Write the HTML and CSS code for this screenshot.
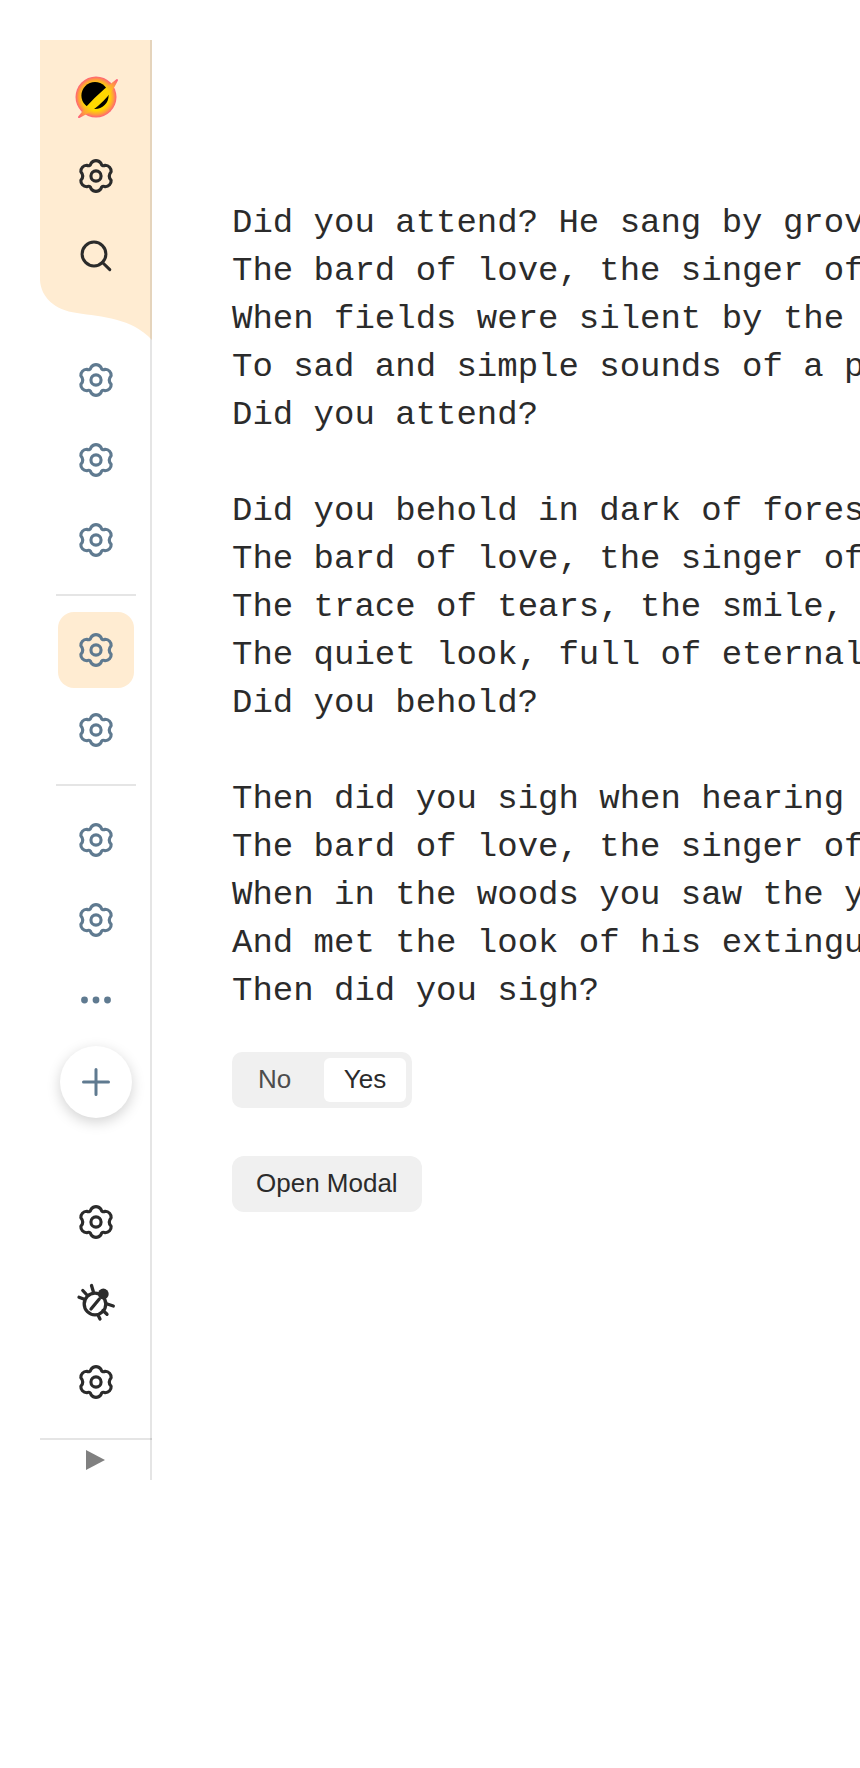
FILE: index.html
```html
<!DOCTYPE html>
<html lang="en">
<head>
    <meta charset="UTF-8">
    <title>Did you attend?</title>
    <meta name="viewport" content="width=device-width, initial-scale=1">
    <link rel="stylesheet" href="styles.css">
</head>
<body>
    <svg class="defs" width="0" height="0" aria-hidden="true">
        <defs>
            <symbol id="gear" viewBox="1.5 1.5 37 37">
                <path fill="none" stroke="currentColor" stroke-width="2.9" stroke-linejoin="round" d="M15.6 8A5.5 5.5 0 0 1 24.4 8Q25.5 11.5 28.6 10.1A5.5 5.5 0 0 1 34 16Q30.5 20 34 24A5.5 5.5 0 0 1 28.6 29.9Q25.5 28.5 24.4 32A5.5 5.5 0 0 1 15.6 32Q14.5 28.5 11.4 29.9A5.5 5.5 0 0 1 6 24Q9.5 20 6 16A5.5 5.5 0 0 1 11.4 10.1Q14.5 11.5 15.6 8Z"/>
                <circle cx="20" cy="20" r="4.7" fill="none" stroke="currentColor" stroke-width="2.9"/>
            </symbol>
            <radialGradient id="halo">
                <stop offset="0.66" stop-color="#ffd800"/>
                <stop offset="0.84" stop-color="#ffa238"/>
                <stop offset="1" stop-color="#ff6079"/>
            </radialGradient>
            <linearGradient id="band" gradientUnits="userSpaceOnUse" x1="5" y1="42" x2="43" y2="5">
                <stop offset="0" stop-color="#ff6079"/>
                <stop offset="0.14" stop-color="#ffa238"/>
                <stop offset="0.28" stop-color="#ffd800"/>
                <stop offset="0.72" stop-color="#ffd800"/>
                <stop offset="0.86" stop-color="#ffa238"/>
                <stop offset="1" stop-color="#ff6079"/>
            </linearGradient>
        </defs>
    </svg>

    <div class="page">
        <nav class="sidebar">
            <div class="top-panel">
                <div class="top-items">
                    <a class="item">
                        <svg class="logo" viewBox="0 0 44 44">
                            <circle cx="22" cy="22" r="20.5" fill="url(#halo)"/>
                            <circle cx="21" cy="20.5" r="13.6" fill="#000"/>
                            <path d="M5 42C14 30 30 15 43 5C37 18 24 33 5 42Z" fill="url(#band)" stroke="url(#band)" stroke-width="2" stroke-linejoin="round"/>
                        </svg>
                    </a>
                    <a class="item dark"><svg class="icon"><use href="#gear"/></svg></a>
                    <a class="item dark">
                        <svg class="icon" viewBox="0 0 40 40" fill="none" stroke="currentColor" stroke-width="3" stroke-linecap="round">
                            <circle cx="18" cy="18" r="11.9"/>
                            <path d="M26.5 26.5L33.8 33.6"/>
                        </svg>
                    </a>
                </div>
                <svg class="wave" viewBox="0 0 112 60" preserveAspectRatio="none">
                    <path d="M0 0C1 17 14 30 37 33C62 37 92 38 112 60V0Z"/>
                </svg>
            </div>

            <a class="item"><svg class="icon"><use href="#gear"/></svg></a>
            <a class="item"><svg class="icon"><use href="#gear"/></svg></a>
            <a class="item"><svg class="icon"><use href="#gear"/></svg></a>
            <hr class="divider">
            <a class="item active"><svg class="icon"><use href="#gear"/></svg></a>
            <a class="item"><svg class="icon"><use href="#gear"/></svg></a>
            <hr class="divider">
            <a class="item"><svg class="icon"><use href="#gear"/></svg></a>
            <a class="item"><svg class="icon"><use href="#gear"/></svg></a>
            <a class="item">
                <svg class="icon" viewBox="0 0 40 40" fill="currentColor">
                    <circle cx="8.5" cy="20" r="3.4"/>
                    <circle cx="20" cy="20" r="3.4"/>
                    <circle cx="31.5" cy="20" r="3.4"/>
                </svg>
            </a>
            <button class="fab" type="button">
                <svg class="plus" viewBox="0 0 28 28" fill="none" stroke="currentColor" stroke-width="3" stroke-linecap="round">
                    <path d="M14 1.5V26.5M1.5 14H26.5"/>
                </svg>
            </button>

            <div class="bottom-items">
                <a class="item dark"><svg class="icon"><use href="#gear"/></svg></a>
                <a class="item dark">
                    <svg class="icon" viewBox="0 0 40 40" fill="none" stroke="currentColor" stroke-width="3.3" stroke-linecap="round">
                        <circle cx="19" cy="22" r="10.8"/>
                        <path d="M23.3 17L15 27M15.5 3.5L17.3 9.5M6.8 8.5L10.5 12.5M3 15.3L8.3 17.3M37.3 24L30.5 21.8M31 32.3L27 28.5M24 37L22 33"/>
                        <circle cx="27.3" cy="12" r="5.4" fill="currentColor" stroke="none"/>
                    </svg>
                </a>
                <a class="item dark"><svg class="icon"><use href="#gear"/></svg></a>
            </div>
            <div class="sidebar-footer">
                <svg class="expand" viewBox="0 0 19 20"><path d="M0 0L19 10L0 20Z"/></svg>
            </div>
        </nav>

        <main class="content">
            <pre class="poem">Did you attend? He sang by groves at night,
The bard of love, the singer of his sorrow;
When fields were silent by the early morrow,
To sad and simple sounds of a pipe's light
Did you attend?

Did you behold in dark of forest glade
The bard of love, the singer of his sorrow?
The trace of tears, the smile, that sometimes strayed,
The quiet look, full of eternal sorrow,
Did you behold?

Then did you sigh when hearing the soft voice,
The bard of love, the singer of his sorrow,
When in the woods you saw the youthful face,
And met the look of his extinguished eyes,
Then did you sigh?</pre>

            <div class="toggle">
                <button class="toggle-option" type="button">No</button>
                <button class="toggle-option selected" type="button">Yes</button>
            </div>

            <button class="open-modal" type="button">Open Modal</button>
        </main>
    </div>
</body>
</html>
```

FILE: styles.css
```css
html, body { margin: 0; overflow: hidden; background: #fff; }
body { font-family: "Liberation Sans", Arial, sans-serif; color: #2b2b2b; }
.defs { display: block; }
.page { display: flex; align-items: flex-start; height: 1768px; padding-top: 40px; padding-left: 40px; box-sizing: border-box; }

.sidebar { position: relative; flex: none; width: 112px; height: 1440px; display: flex; flex-direction: column; align-items: center; color: #5f7a90; }
.sidebar::after { content: ""; position: absolute; top: 0; right: 0; bottom: 0; width: 2px; background: rgba(0, 0, 0, 0.1); }

.top-panel { width: 100%; background: linear-gradient(#ffecd2, #ffecd2) top / 100% 240px no-repeat; }
.top-items { padding-top: 16px; display: flex; flex-direction: column; align-items: center; }
.wave { display: block; width: 100%; height: 60px; margin-top: -16px; }
.wave path { fill: #ffecd2; }

.item { flex: none; width: 76px; height: 80px; display: flex; align-items: center; justify-content: center; }
.item.dark { color: #2b2b2b; }
.item.active { height: 76px; margin: 2px 0; background: #ffecd2; border-radius: 16px; }
.icon { width: 40px; height: 40px; display: block; }
.logo { width: 44px; height: 44px; display: block; margin-top: 2px; }

.divider { flex: none; width: 80px; height: 2px; margin: 14px 0; border: 0; background: #e5e5e5; }

.fab { flex: none; width: 72px; height: 72px; margin-top: 6px; padding: 0; display: flex; align-items: center; justify-content: center; border: 0; border-radius: 50%; background: #fff; color: #5f7a90; box-shadow: 0 4px 14px rgba(0, 0, 0, 0.18); }
.plus { width: 28px; height: 28px; }

.bottom-items { margin-top: auto; display: flex; flex-direction: column; align-items: center; }
.sidebar-footer { flex: none; width: 100%; height: 42px; margin-top: 16px; padding-right: 2px; box-sizing: border-box; border-top: 2px solid #e5e5e5; display: flex; align-items: center; justify-content: center; }
.expand { width: 19px; height: 20px; fill: #808080; }

.content { flex: 1; min-width: 0; overflow: hidden; padding: 159px 0 0 80px; }
.poem { margin: 0; font-family: "Liberation Mono", "Courier New", monospace; font-size: 34px; line-height: 48px; color: #2b2b2b; white-space: pre; }

.toggle { display: inline-flex; gap: 13px; margin-top: 37px; padding: 6px; border-radius: 10px; background: #f0f0f0; }
.toggle-option { height: 44px; padding: 0 20px 2px; border: 0; border-radius: 6px; background: transparent; font: 26px "Liberation Sans", Arial, sans-serif; color: #4d4d4d; }
.toggle-option.selected { padding: 0 19.6px 2px; background: #fff; color: #2b2b2b; }

.open-modal { display: block; height: 56px; margin-top: 48px; padding: 0 24px 2px; border: 0; border-radius: 12px; background: #f0f0f0; font: 26px "Liberation Sans", Arial, sans-serif; color: #2b2b2b; }
```
